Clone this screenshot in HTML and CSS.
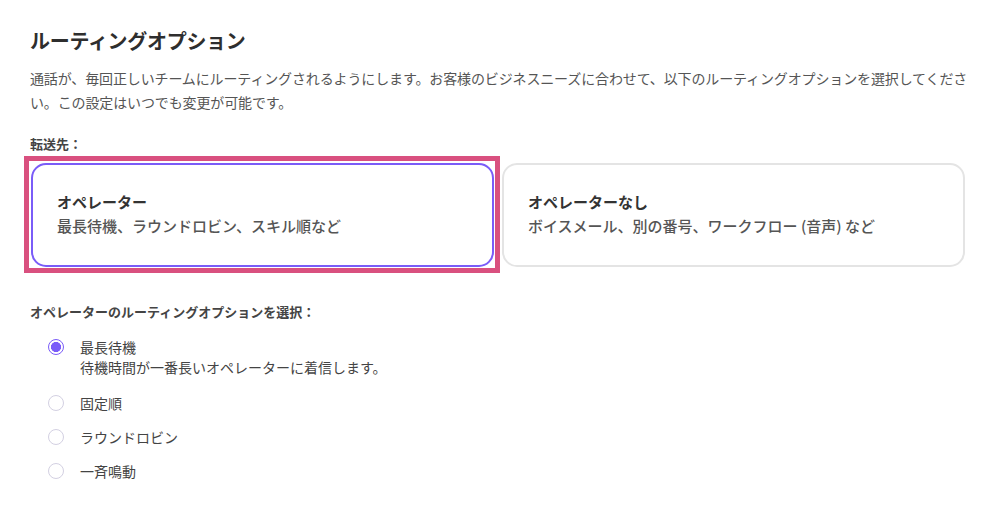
FILE: index.html
```html
<!DOCTYPE html>
<html lang="ja">
<head>
<meta charset="utf-8">
<title>ルーティングオプション</title>
<link rel="stylesheet" href="styles.css">
</head>
<body>
<main class="page">
  <h1 class="title">ルーティングオプション</h1>
  <p class="desc">通話が、毎回正しいチームにルーティングされるようにします。お客様のビジネスニーズに合わせて、以下のルーティングオプションを選択してください。この設定はいつでも変更が可能です。</p>

  <div class="label label-dest">転送先：</div>
  <div class="cards">
    <div class="highlight">
      <div class="card card-selected">
        <div class="card-title">オペレーター</div>
        <div class="card-sub">最長待機、ラウンドロビン、スキル順など</div>
      </div>
    </div>
    <div class="card">
      <div class="card-title">オペレーターなし</div>
      <div class="card-sub">ボイスメール、別の番号、ワークフロー (音声) など</div>
    </div>
  </div>

  <div class="label label-options">オペレーターのルーティングオプションを選択：</div>
  <ul class="radios">
    <li class="radio-item">
      <span class="radio radio-on"></span>
      <div class="radio-text">
        <div>最長待機</div>
        <div class="radio-desc">待機時間が一番長いオペレーターに着信します。</div>
      </div>
    </li>
    <li class="radio-item">
      <span class="radio"></span>
      <div class="radio-text"><div>固定順</div></div>
    </li>
    <li class="radio-item">
      <span class="radio"></span>
      <div class="radio-text"><div>ラウンドロビン</div></div>
    </li>
    <li class="radio-item">
      <span class="radio"></span>
      <div class="radio-text"><div>一斉鳴動</div></div>
    </li>
  </ul>
</main>
</body>
</html>
```
FILE: styles.css
```css
* { box-sizing: border-box; }
html, body { margin: 0; padding: 0; background: #fff; }
body {
  font-family: "Noto Sans CJK JP", "Noto Sans", sans-serif;
  color: #444;
}
.page {
  padding: 27px 22px 0 30px;
}
.title {
  margin: 0;
  font-size: 20px;
  line-height: 28px;
  font-weight: 700;
  color: #2e2e2e;
  letter-spacing: -0.3px;
}
.desc {
  margin: 11px 0 0 0;
  font-size: 14px;
  line-height: 24px;
  color: #555;
  letter-spacing: -0.13px;
}
.label {
  font-size: 13px;
  line-height: 20px;
  font-weight: 700;
  color: #444;
}
.label-dest { margin-top: 20px; }
.cards {
  margin-top: 9px;
  margin-left: 1px;
  width: 934px;
  display: grid;
  grid-template-columns: 1fr 1fr;
  gap: 8px;
}
.highlight {
  margin: -7px -6px -6px -7px;
  border: 5px solid #d9507f;
  padding: 2px 1px 1px 2px;
  background: #fff;
  display: flex;
}
.highlight .card { flex: 1; }
.card {
  border: 2px solid #e4e4e4;
  border-radius: 15px;
  padding: 25px 24px 27px 24px;
  background: #fff;
}
.card-selected {
  border-color: #7a5cf8;
}
.card-title {
  font-size: 15px;
  line-height: 24px;
  font-weight: 700;
  color: #333;
}
.card-sub {
  font-size: 15px;
  line-height: 24px;
  font-weight: 500;
  color: #555;
}
.label-options { margin-top: 35px; }
.radios {
  list-style: none;
  margin: 15px 0 0 18px;
  padding: 0;
  display: flex;
  flex-direction: column;
  gap: 14px;
}
.radio-item {
  display: flex;
  align-items: flex-start;
  gap: 16px;
}
.radio {
  flex: none;
  width: 16px;
  height: 16px;
  margin-top: 2px;
  border-radius: 50%;
  border: 1px solid #d3d0e2;
  background: #fff;
}
.radio-on {
  border: 1.5px solid #7a5cf8;
  background: radial-gradient(circle, #7a5cf8 0 4.8px, #fff 5.3px);
}
.radio-text {
  font-size: 14px;
  line-height: 20px;
  color: #444;
}
.radio-desc { margin-bottom: 2px; }
```
